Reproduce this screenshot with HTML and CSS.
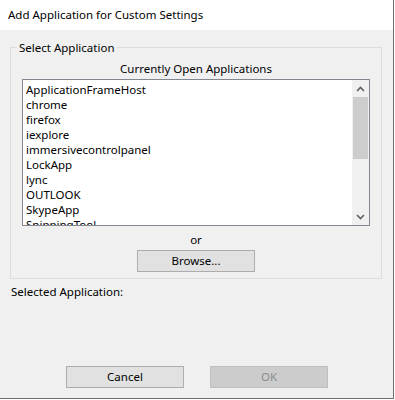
FILE: index.html
```html
<html>
<head>
	<link rel="stylesheet" href="styles.css">
</head>
<body>
	<div class="window">
		<div class="title_bar">Add Application for Custom Settings</div>
		<div class="client">
			<fieldset class="group">
				<legend class="group_label">Select Application</legend>
				<div class="caption">Currently Open Applications</div>
				<div class="list_box">
					<div class="items">
						<div class="item">ApplicationFrameHost</div>
						<div class="item">chrome</div>
						<div class="item">firefox</div>
						<div class="item">iexplore</div>
						<div class="item">immersivecontrolpanel</div>
						<div class="item">LockApp</div>
						<div class="item">lync</div>
						<div class="item">OUTLOOK</div>
						<div class="item">SkypeApp</div>
						<div class="item">SnippingTool</div>
					</div>
					<div class="scroll_bar">
						<div class="arrow">
							<svg width="9" height="6" viewBox="0 0 9 6"><path d="M1 5 L4.5 1.5 L8 5" fill="none" stroke="#606060" stroke-width="1.6"/></svg>
						</div>
						<div class="thumb"></div>
						<div class="track"></div>
						<div class="arrow">
							<svg width="9" height="6" viewBox="0 0 9 6"><path d="M1 1 L4.5 4.5 L8 1" fill="none" stroke="#606060" stroke-width="1.6"/></svg>
						</div>
					</div>
				</div>
				<div class="caption or">or</div>
				<div class="center_row">
					<div class="button">Browse...</div>
				</div>
			</fieldset>
			<div class="selected">Selected Application:</div>
			<div class="button_row">
				<div class="button">Cancel</div>
				<div class="button disabled">OK</div>
			</div>
		</div>
	</div>
</body>
</html>
```

FILE: styles.css
```css
body
{
	margin: 0;
	background-color: white;
	font-family: "Noto Sans", "Liberation Sans", sans-serif;
	font-size: 11.5px;
	color: black;
}
.window
{
	width: 393px;
	height: 398px;
	border-right: 1px solid #707070;
	border-bottom: 1px solid #707070;
	display: flex;
	flex-direction: column;
}
.title_bar
{
	height: 30px;
	line-height: 30px;
	padding-left: 8px;
	background-color: white;
}
.client
{
	flex: 1;
	background-color: #f0f0f0;
	padding: 10px 0 0 10px;
	display: flex;
	flex-direction: column;
}
.group
{
	width: 372px;
	margin: 0;
	padding: 6px 11px 6px 11px;
	border: 1px solid #dcdcdc;
	box-sizing: border-box;
	line-height: 15px;
}
.group_label
{
	padding: 0 2px;
	margin-left: -5px;
	line-height: 15px;
}
.caption
{
	text-align: center;
	line-height: 15px;
}
.list_box
{
	margin-top: 3px;
	height: 147px;
	box-sizing: border-box;
	border: 1px solid #828790;
	background-color: white;
	display: flex;
	overflow: hidden;
}
.items
{
	flex: 1;
	padding: 2px 0 0 3px;
}
.item
{
	line-height: 15px;
	white-space: nowrap;
}
.scroll_bar
{
	width: 17px;
	background-color: #f0f0f0;
	display: flex;
	flex-direction: column;
}
.arrow
{
	height: 17px;
	display: flex;
	align-items: center;
	justify-content: center;
}
.thumb
{
	height: 62px;
	margin: 0 1px;
	background-color: #cdcdcd;
}
.track
{
	flex: 1;
}
.or
{
	margin-top: 6px;
}
.center_row
{
	margin-top: 3px;
	display: flex;
	justify-content: center;
}
.button
{
	width: 118px;
	height: 22px;
	box-sizing: border-box;
	border: 1px solid #adadad;
	background-color: #e1e1e1;
	text-align: center;
	line-height: 20px;
}
.selected
{
	margin-top: 5px;
	margin-left: 1px;
	line-height: 15px;
}
.button_row
{
	margin-top: auto;
	margin-bottom: 10px;
	margin-left: 56px;
	display: flex;
	gap: 26px;
}
.disabled
{
	background-color: #cccccc;
	border-color: #bfbfbf;
	color: #8c8c8c;
}
```
